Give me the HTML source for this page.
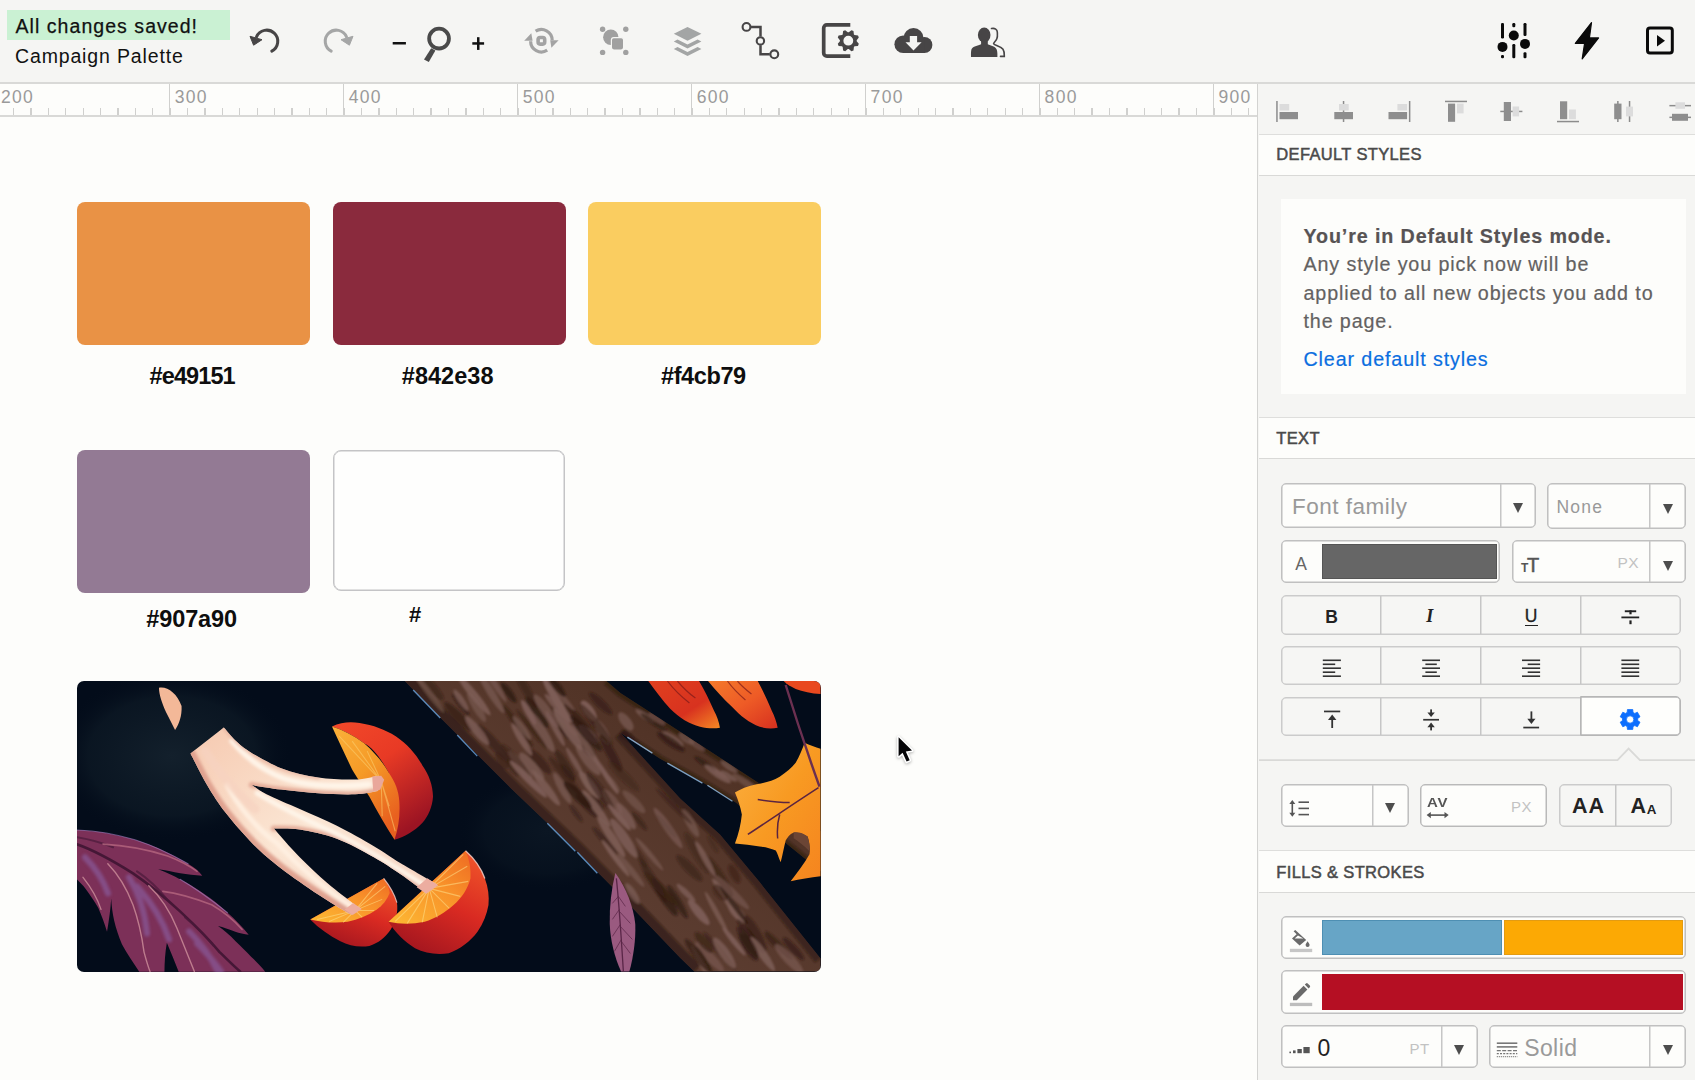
<!DOCTYPE html>
<html lang="en">
<head>
<meta charset="utf-8">
<title>Campaign Palette</title>
<style>
*{box-sizing:border-box;margin:0;padding:0}
html,body{width:1695px;height:1080px;overflow:hidden;background:#fdfdfb;font-family:"Liberation Sans",sans-serif;color:#111}
.abs{position:absolute}
#app{position:relative;width:1695px;height:1080px;overflow:hidden;background:#fdfdfb}
/* toolbar */
#toolbar{position:absolute;left:0;top:0;width:1695px;height:84px;background:#f5f5f3;border-bottom:2px solid #d9d9d7}
#saved{position:absolute;left:7px;top:10px;width:223px;height:30px;background:#caf1d3}
#saved span{position:absolute;left:8.5px;top:3.5px;font-size:19.5px;line-height:24px;color:#111;white-space:nowrap;letter-spacing:1.05px;-webkit-text-stroke:0.25px #111}
#docname{position:absolute;left:15px;top:43.5px;font-size:19.5px;line-height:24px;color:#111;white-space:nowrap;letter-spacing:0.85px}
#toolbar svg{position:absolute;overflow:visible}
/* ruler */
#ruler{position:absolute;left:0;top:84px;width:1257px;height:33px;background:#fdfdfb;border-bottom:2px solid #d9d9d7;overflow:hidden}
#ruler .minor{position:absolute;left:12.9px;top:24px;width:1245px;height:8px;background:repeating-linear-gradient(90deg,#d0d0ce 0,#d0d0ce 1.3px,transparent 1.3px,transparent 17.395px)}
#ruler .maj{position:absolute;top:0;width:1.4px;height:32px;background:#d0d0ce}
#ruler .min{position:absolute;top:24px;width:1px;height:8px;background:#cfcfcd}
#ruler .lbl{position:absolute;top:3px;font-size:17.5px;line-height:20px;color:#9a9a9a;letter-spacing:1.3px}
/* canvas */
.sw{position:absolute;width:233px;height:142.5px;border-radius:8px}
.hex{position:absolute;font-weight:bold;font-size:23.5px;line-height:26px;color:#0e0e0e;white-space:nowrap}
/* panel */
#panel{position:absolute;left:1257.3px;top:84px;width:438px;height:996px;background:#f5f5f3;border-left:1.5px solid #d3d3d1}
.hdr{position:absolute;width:436px;background:#fdfdfb;border-top:1.2px solid #dededc;border-bottom:1.5px solid #d9d9d7}
.hdr span{position:absolute;left:17.3px;font-size:16.5px;line-height:20px;color:#4a4a4a;letter-spacing:0.35px;white-space:nowrap;-webkit-text-stroke:0.5px #4a4a4a}
.box{position:absolute;background:#fdfdfb;border:1px solid #c0c0c0;border-radius:5px;box-shadow:inset 0 0 0 0.55px #c0c0c0}
.btnrow{position:absolute;background:#f6f6f4;border:1px solid #cbcbcb;border-radius:5px;box-shadow:inset 0 0 0 0.5px #cbcbcb}
.vdiv{position:absolute;top:0;bottom:0;width:1px;background:#c6c6c6;box-shadow:0.5px 0 0 0 #c6c6c6}
.arrow{position:absolute;width:0;height:0;border-left:5.4px solid transparent;border-right:5.4px solid transparent;border-top:10.8px solid #4d4d4d;margin-left:-0.5px}
.ph{position:absolute;color:#999;white-space:nowrap}
#pc svg{position:absolute;overflow:visible;pointer-events:none;z-index:2}
#pc .btnrow{z-index:0}
.card1{font-size:19.7px;line-height:28px;white-space:nowrap;letter-spacing:0.88px;-webkit-text-stroke:0.2px currentColor}
</style>
</head>
<body>
<div id="app">

<!-- TOOLBAR -->
<div id="toolbar">
  <div id="saved"><span>All changes saved!</span></div>
  <div id="docname">Campaign Palette</div>
  <svg style="left:0;top:0" width="1695" height="83" viewBox="0 0 1695 83">
  <!-- undo -->
  <g fill="none" stroke="#474546" stroke-width="3">
    <path d="M256.5 36.8A11.1 11.1 0 1 1 271.8 51.1" stroke-linecap="round"/>
  </g>
  <path d="M250 36.3L262 39.7L253.6 45.2Z" fill="#474546" stroke="#474546" stroke-width="1" stroke-linejoin="round"/>
  <!-- redo -->
  <g fill="none" stroke="#a5a6a6" stroke-width="3">
    <path d="M346.5 36.8A11.1 11.1 0 1 0 331.2 51.1" stroke-linecap="round"/>
  </g>
  <path d="M353 36.3L341 39.7L349.4 45.2Z" fill="#a5a6a6" stroke="#a5a6a6" stroke-width="1" stroke-linejoin="round"/>
  <!-- zoom minus -->
  <rect x="392.7" y="42" width="13.2" height="2.5" fill="#111"/>
  <!-- magnifier -->
  <circle cx="439.05" cy="38.6" r="9.9" fill="none" stroke="#4a4a4a" stroke-width="3.8"/>
  <path d="M431.2 48.2L435.4 50.4L428.8 62L424 59.4Z" fill="#4a4a4a"/>
  <!-- zoom plus -->
  <rect x="472.3" y="42.2" width="11.8" height="2.5" fill="#111"/>
  <rect x="477" y="37.2" width="2.5" height="12.7" fill="#111"/>
  <!-- rotate/sync (disabled) -->
  <g fill="none" stroke="#a3a3a3">
    <rect x="538.1" y="37.5" width="6.6" height="6.6" rx="2" stroke-width="3.6"/>
    <path d="M535.6 31.2A10.8 10.8 0 0 1 552.2 40.2" stroke-width="3.2"/>
    <path d="M547.2 50.2A10.8 10.8 0 0 1 530.6 41.2" stroke-width="3.2"/>
  </g>
  <path d="M524.2 40.8L531.3 33.2L532.6 40.8Z" fill="#a3a3a3"/>
  <path d="M550.2 40.3L558.6 40.3L551.4 47.8Z" fill="#a3a3a3"/>
  <!-- group (disabled) -->
  <g fill="#a0a0a0">
    <circle cx="602.6" cy="29.2" r="2.7"/><circle cx="625.8" cy="29.2" r="2.7"/>
    <circle cx="602.6" cy="52.4" r="2.7"/><circle cx="625.8" cy="52.4" r="2.7"/>
    <circle cx="610.8" cy="37.2" r="7.7"/>
    <rect x="611.4" y="37.6" width="12.2" height="12.4" rx="2.4" stroke="#f5f5f3" stroke-width="1.2"/>
  </g>
  <!-- layers (disabled) -->
  <g fill="#a3a5a5">
    <path d="M673.8 33.8L687.5 26.9L701.4 33.8L687.5 40.7Z"/>
    <path d="M673.8 41.5L677.5 39.5L687.5 44.6L697.6 39.5L701.4 41.5L687.5 48.4Z"/>
    <path d="M673.8 48.9L677.5 46.9L687.5 52L697.6 46.9L701.4 48.9L687.5 56Z"/>
  </g>
  <!-- connector -->
  <g fill="none" stroke="#474546">
    <circle cx="746.5" cy="26.9" r="3.9" stroke-width="2.1"/>
    <circle cx="760.4" cy="40.9" r="3.7" stroke-width="2.1"/>
    <circle cx="774.3" cy="54.3" r="3.9" stroke-width="2.1"/>
    <path d="M751 26.9H760.5V36.6M760.5 45.2V54.3H769.8" stroke-width="2.5"/>
  </g>
  <!-- page settings -->
  <path d="M850.3 24.9H826.9a3.2 3.2 0 0 0-3.2 3.2V52.9a3.2 3.2 0 0 0 3.2 3.2H850.3" fill="none" stroke="#474546" stroke-width="3.7"/>
  <path id="gear" fill="#474546" fill-rule="evenodd" d="M848.8 32.3L851.4 30.2L853.5 31.0L853.9 34.4L854.6 35.1L858.0 35.5L858.8 37.6L856.7 40.2L856.7 41.2L858.8 43.8L858.0 45.9L854.6 46.3L853.9 47.0L853.5 50.4L851.4 51.2L848.8 49.1L847.8 49.1L845.2 51.2L843.1 50.4L842.7 47.0L842.0 46.3L838.6 45.9L837.8 43.8L839.9 41.2L839.9 40.2L837.8 37.6L838.6 35.5L842.0 35.1L842.7 34.4L843.1 31.0L845.2 30.2L847.8 32.3ZM843.4 40.7a4.9 4.9 0 1 0 9.8 0a4.9 4.9 0 1 0 -9.8 0Z"/>
  <!-- cloud download -->
  <g fill="#474546">
    <circle cx="913.5" cy="38" r="10"/>
    <circle cx="903.2" cy="44.2" r="8.8"/>
    <circle cx="924.4" cy="45" r="8"/>
    <rect x="903" y="40" width="21.6" height="13"/>
  </g>
  <path d="M909.8 36.1H917.1V42.2H921.6L913.5 50.4L905.5 42.2H909.8Z" fill="#f5f5f3"/>
  <!-- users -->
  <g fill="#474546">
    <ellipse cx="984.2" cy="35" rx="6.3" ry="7.5"/>
    <path d="M981.1 40V44.3C978 45.5 972.5 46.5 971.4 49.5C970.8 52 971 55 971 57H997.4C997.4 55 997.6 52 996.7 49.5C995.6 46.5 990.8 45.5 987.8 44.3V40Z"/>
  </g>
  <path d="M991.5 28.5C995 27.8 997.2 29.5 997.3 32C997.5 35 997.8 37 996.8 38.8C996 41 993.6 42.5 993.6 43.6C993.8 45 1000.5 46 1003 49.2C1004.5 51.5 1004.3 54 1004.3 56.4H1000.5" fill="none" stroke="#474546" stroke-width="1.6" stroke-linecap="round"/>
  <!-- sliders -->
  <g fill="#0a0a0a">
    <rect x="1501" y="23" width="3" height="15.5" rx="1.2"/>
    <rect x="1501" y="55" width="3" height="3.3" rx="1.2"/>
    <circle cx="1502.5" cy="46.9" r="5"/>
    <rect x="1512.3" y="23" width="3" height="4.2" rx="1.2"/>
    <rect x="1512.3" y="44" width="3" height="14.3" rx="1.2"/>
    <circle cx="1513.8" cy="35.5" r="5"/>
    <rect x="1523.5" y="23" width="3" height="13" rx="1.2"/>
    <rect x="1523.5" y="52.3" width="3" height="6" rx="1.2"/>
    <circle cx="1525" cy="43.9" r="5"/>
  </g>
  <!-- lightning -->
  <path d="M1591.5 22.6L1575.3 43.3H1584.6L1582.2 58.8L1598.6 37.9H1589.4Z" fill="#0a0a0a" stroke="#0a0a0a" stroke-width="1.2" stroke-linejoin="round"/>
  <!-- play -->
  <rect x="1647.5" y="28.1" width="24.8" height="24.9" rx="2.5" fill="none" stroke="#0a0a0a" stroke-width="3"/>
  <path d="M1657 35L1665 40.7L1657 46.5Z" fill="#0a0a0a"/>
</svg>

</div>

<!-- RULER -->
<div id="ruler">
  <div class="minor"></div>
  <div class="lbl" style="left:0.9px">200</div>
  <div class="maj" style="left:168.8px"></div>
  <div class="lbl" style="left:174.8px">300</div>
  <div class="maj" style="left:342.8px"></div>
  <div class="lbl" style="left:348.8px">400</div>
  <div class="maj" style="left:516.7px"></div>
  <div class="lbl" style="left:522.7px">500</div>
  <div class="maj" style="left:690.7px"></div>
  <div class="lbl" style="left:696.7px">600</div>
  <div class="maj" style="left:864.6px"></div>
  <div class="lbl" style="left:870.6px">700</div>
  <div class="maj" style="left:1038.6px"></div>
  <div class="lbl" style="left:1044.6px">800</div>
  <div class="maj" style="left:1212.5px"></div>
  <div class="lbl" style="left:1218.5px">900</div>
</div>

<!-- CANVAS -->
<div id="canvas">
  <div class="sw" style="left:77px;top:202px;background:#e99245"></div>
  <div class="sw" style="left:333px;top:202px;background:#8a2a3d"></div>
  <div class="sw" style="left:588px;top:202px;background:#facd60"></div>
  <div class="hex" style="left:149.6px;top:362.5px;letter-spacing:-0.9px">#e49151</div>
  <div class="hex" style="left:401.8px;top:362.5px;letter-spacing:0.03px">#842e38</div>
  <div class="hex" style="left:661px;top:362.5px;letter-spacing:-0.39px">#f4cb79</div>
  <div class="sw" style="left:77px;top:450px;height:143px;background:#937a94"></div>
  <div class="sw" style="left:333px;top:450px;width:232px;height:141px;background:#fefefd;border:1px solid #c4c4c6;box-shadow:inset 0 0 0 0.5px #c4c4c6"></div>
  <div class="hex" style="left:146.3px;top:606px;letter-spacing:-0.12px">#907a90</div>
  <div class="hex" style="left:409px;top:602px;font-size:22px">#</div>
  <div class="abs" style="left:77px;top:681px;width:743.5px;height:290.5px;border-radius:7px;overflow:hidden;background:#030c1a">
  <svg width="743.5" height="290.5" viewBox="0 0 743 290" preserveAspectRatio="none" style="position:absolute;left:0;top:0">
    <defs>
      <radialGradient id="bgsm" cx="0.5" cy="0.5" r="0.5"><stop offset="0" stop-color="#13202c"/><stop offset="0.7" stop-color="#0c1824" stop-opacity="0.8"/><stop offset="1" stop-color="#030c1a" stop-opacity="0"/></radialGradient>
      <linearGradient id="trk" x1="0" y1="1" x2="1" y2="0"><stop offset="0" stop-color="#432819"/><stop offset="0.35" stop-color="#5c3d31"/><stop offset="0.7" stop-color="#523427"/><stop offset="1" stop-color="#42271a"/></linearGradient>
      <linearGradient id="stem" x1="0" y1="0" x2="1" y2="1"><stop offset="0" stop-color="#f6c9b0"/><stop offset="0.5" stop-color="#fbe6d4"/><stop offset="1" stop-color="#f3cdbb"/></linearGradient>
      <linearGradient id="dome1" x1="0" y1="0" x2="0.6" y2="1"><stop offset="0" stop-color="#f2492a"/><stop offset="0.45" stop-color="#e83a25"/><stop offset="1" stop-color="#9c1423"/></linearGradient>
      <linearGradient id="dome2" x1="0.8" y1="0" x2="0.3" y2="1"><stop offset="0" stop-color="#f0552a"/><stop offset="0.5" stop-color="#d92a22"/><stop offset="1" stop-color="#a3161f"/></linearGradient>
      <linearGradient id="face1" x1="0" y1="0" x2="0.6" y2="1"><stop offset="0" stop-color="#fbb13a"/><stop offset="0.5" stop-color="#f59a27"/><stop offset="1" stop-color="#e8601f"/></linearGradient>
      <linearGradient id="face2" x1="0" y1="1" x2="1" y2="0"><stop offset="0" stop-color="#fdb933"/><stop offset="0.6" stop-color="#f8912a"/><stop offset="1" stop-color="#ee6a22"/></linearGradient>
      <linearGradient id="purp" x1="0" y1="0" x2="1" y2="1"><stop offset="0" stop-color="#6e3358"/><stop offset="0.5" stop-color="#8f4a78"/><stop offset="1" stop-color="#9a3f6a"/></linearGradient>
      <linearGradient id="rl1" x1="0" y1="0" x2="1" y2="1"><stop offset="0" stop-color="#e0401f"/><stop offset="0.6" stop-color="#d8321f"/><stop offset="1" stop-color="#f68a24"/></linearGradient>
      <linearGradient id="rl2" x1="0" y1="0" x2="1" y2="1"><stop offset="0" stop-color="#f47a2b"/><stop offset="0.5" stop-color="#ee5b26"/><stop offset="1" stop-color="#d6301f"/></linearGradient>
      <linearGradient id="maple" x1="0" y1="0" x2="1" y2="1"><stop offset="0" stop-color="#fbb040"/><stop offset="0.5" stop-color="#f89a22"/><stop offset="1" stop-color="#f5841f"/></linearGradient>
    </defs>
    <!-- background smudges -->
    <ellipse cx="95" cy="75" rx="120" ry="85" fill="url(#bgsm)"/>
    <ellipse cx="470" cy="150" rx="90" ry="60" fill="url(#bgsm)" opacity="0.5"/>
    <!-- TRUNK -->
    <path d="M327.6 0L529 0L543 11.9L582.8 37.8L622.6 63.7L662.4 89.5L682.3 102.5L743 150L743 190L658.4 121.4L622.6 99.5L582.8 77.6L543 51.7L562.9 73.6L602.7 117.4L642.5 153.2L682.3 201L743 277L743 290L617 290L603 276.4L538 208.6L498.6 169L433.6 107L363 36.4Z" fill="url(#trk)"/>
    <filter id="sblur" x="-20%" y="-20%" width="140%" height="140%"><feGaussianBlur stdDeviation="1.8"/></filter><clipPath id="tclip"><path d="M327.6 0L529 0L543 11.9L582.8 37.8L622.6 63.7L662.4 89.5L682.3 102.5L743 150L743 190L658.4 121.4L622.6 99.5L582.8 77.6L543 51.7L562.9 73.6L602.7 117.4L642.5 153.2L682.3 201L743 277L743 290L617 290L603 276.4L538 208.6L498.6 169L433.6 107L363 36.4Z"/></clipPath><filter id="tblur" x="-5%" y="-5%" width="110%" height="110%"><feGaussianBlur stdDeviation="1.3"/></filter><g clip-path="url(#tclip)"><g filter="url(#tblur)"><path d="M327.6 0L363 36.4L433.6 107L498.6 169L538 208.6L603 276.4L617 290" stroke="#26140c" stroke-width="18" fill="none" opacity="0.6"/><path d="M543 51.7L562.9 73.6L602.7 117.4L642.5 153.2L682.3 201L743 277" stroke="#26140c" stroke-width="14" fill="none" opacity="0.55"/><path d="M529 0L543 11.9L582.8 37.8L622.6 63.7L662.4 89.5L682.3 102.5L743 150" stroke="#26140c" stroke-width="8" fill="none" opacity="0.5"/><path d="M543 51.7L582.8 77.6L622.6 99.5L658.4 121.4L743 190" stroke="#26140c" stroke-width="7" fill="none" opacity="0.5"/><ellipse cx="587.3" cy="215.1" rx="22.7" ry="5.0" transform="rotate(57 587.3 215.1)" fill="#2c1810" opacity="0.74"/><ellipse cx="487.3" cy="29.6" rx="14.0" ry="4.4" transform="rotate(51 487.3 29.6)" fill="#7e5e57" opacity="0.61"/><ellipse cx="416.5" cy="62.5" rx="25.7" ry="4.8" transform="rotate(49 416.5 62.5)" fill="#3a2116" opacity="0.76"/><ellipse cx="572.1" cy="172.8" rx="21.3" ry="2.6" transform="rotate(50 572.1 172.8)" fill="#7e5e57" opacity="0.62"/><ellipse cx="525.2" cy="51.1" rx="14.1" ry="5.0" transform="rotate(61 525.2 51.1)" fill="#7e5e57" opacity="0.56"/><ellipse cx="642.1" cy="269.6" rx="25.1" ry="3.4" transform="rotate(50 642.1 269.6)" fill="#331c12" opacity="0.49"/><ellipse cx="639.1" cy="231.2" rx="23.8" ry="2.5" transform="rotate(61 639.1 231.2)" fill="#7e5e57" opacity="0.76"/><ellipse cx="479.8" cy="43.0" rx="14.4" ry="4.4" transform="rotate(46 479.8 43.0)" fill="#331c12" opacity="0.51"/><ellipse cx="396.7" cy="14.1" rx="25.8" ry="3.9" transform="rotate(51 396.7 14.1)" fill="#7e5e57" opacity="0.88"/><ellipse cx="518.2" cy="122.3" rx="10.9" ry="5.0" transform="rotate(45 518.2 122.3)" fill="#2c1810" opacity="0.50"/><ellipse cx="632.2" cy="275.4" rx="20.1" ry="4.6" transform="rotate(46 632.2 275.4)" fill="#7e5e57" opacity="0.57"/><ellipse cx="503.7" cy="40.9" rx="24.8" ry="4.1" transform="rotate(47 503.7 40.9)" fill="#331c12" opacity="0.69"/><ellipse cx="461.2" cy="79.5" rx="17.5" ry="4.9" transform="rotate(46 461.2 79.5)" fill="#3a2116" opacity="0.79"/><ellipse cx="588.9" cy="144.8" rx="15.4" ry="2.6" transform="rotate(49 588.9 144.8)" fill="#3a2116" opacity="0.58"/><ellipse cx="654.6" cy="224.7" rx="21.1" ry="4.3" transform="rotate(58 654.6 224.7)" fill="#7e5e57" opacity="0.88"/><ellipse cx="625.7" cy="277.5" rx="15.4" ry="2.9" transform="rotate(59 625.7 277.5)" fill="#331c12" opacity="0.56"/><ellipse cx="443.0" cy="83.8" rx="18.0" ry="4.3" transform="rotate(50 443.0 83.8)" fill="#7e5e57" opacity="0.85"/><ellipse cx="678.1" cy="252.3" rx="21.0" ry="5.1" transform="rotate(61 678.1 252.3)" fill="#3a2116" opacity="0.79"/><ellipse cx="626.7" cy="286.1" rx="25.7" ry="2.9" transform="rotate(60 626.7 286.1)" fill="#7e5e57" opacity="0.74"/><ellipse cx="556.5" cy="120.5" rx="15.6" ry="4.3" transform="rotate(45 556.5 120.5)" fill="#7e5e57" opacity="0.55"/><ellipse cx="497.4" cy="80.8" rx="16.6" ry="2.7" transform="rotate(59 497.4 80.8)" fill="#7e5e57" opacity="0.77"/><ellipse cx="454.5" cy="85.6" rx="18.2" ry="5.1" transform="rotate(49 454.5 85.6)" fill="#7e5e57" opacity="0.72"/><ellipse cx="482.6" cy="41.2" rx="19.5" ry="4.0" transform="rotate(61 482.6 41.2)" fill="#3a2116" opacity="0.48"/><ellipse cx="487.7" cy="94.6" rx="24.7" ry="3.9" transform="rotate(50 487.7 94.6)" fill="#3a2116" opacity="0.58"/><ellipse cx="508.3" cy="65.6" rx="14.7" ry="5.1" transform="rotate(51 508.3 65.6)" fill="#2c1810" opacity="0.66"/><ellipse cx="535.0" cy="120.5" rx="15.1" ry="5.2" transform="rotate(53 535.0 120.5)" fill="#7e5e57" opacity="0.56"/><ellipse cx="431.4" cy="11.6" rx="12.2" ry="3.5" transform="rotate(53 431.4 11.6)" fill="#2c1810" opacity="0.78"/><ellipse cx="440.6" cy="44.9" rx="25.8" ry="3.2" transform="rotate(55 440.6 44.9)" fill="#3a2116" opacity="0.75"/><ellipse cx="693.7" cy="259.6" rx="10.3" ry="2.8" transform="rotate(49 693.7 259.6)" fill="#3a2116" opacity="0.55"/><ellipse cx="548.8" cy="134.7" rx="15.8" ry="4.5" transform="rotate(55 548.8 134.7)" fill="#7e5e57" opacity="0.77"/><ellipse cx="575.7" cy="199.8" rx="25.3" ry="4.2" transform="rotate(59 575.7 199.8)" fill="#331c12" opacity="0.59"/><ellipse cx="527.6" cy="159.2" rx="18.0" ry="3.3" transform="rotate(47 527.6 159.2)" fill="#2c1810" opacity="0.47"/><ellipse cx="657.0" cy="192.4" rx="10.4" ry="4.4" transform="rotate(62 657.0 192.4)" fill="#3a2116" opacity="0.62"/><ellipse cx="381.0" cy="35.5" rx="19.8" ry="4.7" transform="rotate(46 381.0 35.5)" fill="#331c12" opacity="0.70"/><ellipse cx="510.9" cy="53.1" rx="13.0" ry="4.6" transform="rotate(45 510.9 53.1)" fill="#7e5e57" opacity="0.81"/><ellipse cx="613.1" cy="141.9" rx="15.7" ry="4.2" transform="rotate(60 613.1 141.9)" fill="#7e5e57" opacity="0.61"/><ellipse cx="590.7" cy="146.7" rx="24.6" ry="4.0" transform="rotate(55 590.7 146.7)" fill="#7e5e57" opacity="0.65"/><ellipse cx="528.4" cy="93.8" rx="22.7" ry="2.5" transform="rotate(57 528.4 93.8)" fill="#7e5e57" opacity="0.93"/><ellipse cx="621.3" cy="230.9" rx="16.1" ry="4.4" transform="rotate(50 621.3 230.9)" fill="#7e5e57" opacity="0.93"/><ellipse cx="479.6" cy="10.5" rx="25.9" ry="3.0" transform="rotate(47 479.6 10.5)" fill="#7e5e57" opacity="0.56"/><ellipse cx="413.6" cy="11.4" rx="24.2" ry="3.7" transform="rotate(58 413.6 11.4)" fill="#7e5e57" opacity="0.67"/><ellipse cx="716.0" cy="267.3" rx="15.2" ry="3.7" transform="rotate(47 716.0 267.3)" fill="#2c1810" opacity="0.58"/><ellipse cx="444.6" cy="46.8" rx="14.6" ry="3.1" transform="rotate(53 444.6 46.8)" fill="#7e5e57" opacity="0.68"/><ellipse cx="354.3" cy="6.3" rx="17.3" ry="4.8" transform="rotate(47 354.3 6.3)" fill="#331c12" opacity="0.55"/><ellipse cx="608.6" cy="211.5" rx="12.6" ry="3.0" transform="rotate(44 608.6 211.5)" fill="#7e5e57" opacity="0.80"/><ellipse cx="479.3" cy="19.4" rx="25.9" ry="3.7" transform="rotate(58 479.3 19.4)" fill="#7e5e57" opacity="0.93"/><ellipse cx="596.7" cy="124.9" rx="25.6" ry="2.4" transform="rotate(45 596.7 124.9)" fill="#331c12" opacity="0.51"/><ellipse cx="612.0" cy="186.8" rx="18.0" ry="4.6" transform="rotate(45 612.0 186.8)" fill="#331c12" opacity="0.56"/><ellipse cx="351.2" cy="10.9" rx="25.5" ry="2.9" transform="rotate(53 351.2 10.9)" fill="#7e5e57" opacity="0.58"/><ellipse cx="459.6" cy="31.3" rx="18.7" ry="5.0" transform="rotate(55 459.6 31.3)" fill="#2c1810" opacity="0.67"/><ellipse cx="512.2" cy="103.7" rx="16.8" ry="4.6" transform="rotate(53 512.2 103.7)" fill="#7e5e57" opacity="0.92"/><ellipse cx="383.6" cy="23.8" rx="13.9" ry="2.6" transform="rotate(52 383.6 23.8)" fill="#2c1810" opacity="0.55"/><ellipse cx="533.5" cy="72.1" rx="21.3" ry="4.6" transform="rotate(60 533.5 72.1)" fill="#2c1810" opacity="0.60"/><ellipse cx="600.1" cy="220.3" rx="19.2" ry="3.6" transform="rotate(59 600.1 220.3)" fill="#2c1810" opacity="0.70"/><ellipse cx="383.8" cy="19.1" rx="12.7" ry="3.1" transform="rotate(56 383.8 19.1)" fill="#7e5e57" opacity="0.77"/><ellipse cx="478.0" cy="47.4" rx="19.9" ry="2.9" transform="rotate(62 478.0 47.4)" fill="#7e5e57" opacity="0.80"/><ellipse cx="509.5" cy="124.5" rx="15.3" ry="3.6" transform="rotate(48 509.5 124.5)" fill="#2c1810" opacity="0.60"/><ellipse cx="647.0" cy="271.5" rx="18.5" ry="5.1" transform="rotate(55 647.0 271.5)" fill="#7e5e57" opacity="0.82"/><ellipse cx="415.7" cy="0.3" rx="24.5" ry="3.1" transform="rotate(57 415.7 0.3)" fill="#7e5e57" opacity="0.64"/><ellipse cx="444.4" cy="58.3" rx="19.0" ry="3.4" transform="rotate(58 444.4 58.3)" fill="#7e5e57" opacity="0.87"/><ellipse cx="534.2" cy="101.3" rx="12.3" ry="3.1" transform="rotate(51 534.2 101.3)" fill="#7e5e57" opacity="0.59"/><ellipse cx="626.4" cy="261.1" rx="13.2" ry="4.6" transform="rotate(50 626.4 261.1)" fill="#3a2116" opacity="0.67"/><ellipse cx="490.7" cy="92.0" rx="10.4" ry="3.3" transform="rotate(51 490.7 92.0)" fill="#3a2116" opacity="0.69"/><ellipse cx="448.3" cy="7.9" rx="22.4" ry="4.1" transform="rotate(60 448.3 7.9)" fill="#331c12" opacity="0.56"/><ellipse cx="641.2" cy="194.3" rx="25.3" ry="4.9" transform="rotate(56 641.2 194.3)" fill="#3a2116" opacity="0.66"/><ellipse cx="562.1" cy="140.1" rx="11.5" ry="2.7" transform="rotate(50 562.1 140.1)" fill="#331c12" opacity="0.59"/><ellipse cx="701.5" cy="264.0" rx="19.8" ry="3.5" transform="rotate(46 701.5 264.0)" fill="#3a2116" opacity="0.69"/><ellipse cx="659.3" cy="231.2" rx="11.2" ry="5.1" transform="rotate(45 659.3 231.2)" fill="#7e5e57" opacity="0.64"/><ellipse cx="672.9" cy="254.8" rx="21.6" ry="3.6" transform="rotate(52 672.9 254.8)" fill="#2c1810" opacity="0.56"/><ellipse cx="562.3" cy="175.0" rx="12.9" ry="2.9" transform="rotate(55 562.3 175.0)" fill="#3a2116" opacity="0.57"/><ellipse cx="523.3" cy="111.4" rx="24.4" ry="4.9" transform="rotate(55 523.3 111.4)" fill="#2c1810" opacity="0.45"/><ellipse cx="468.7" cy="106.6" rx="22.2" ry="4.0" transform="rotate(52 468.7 106.6)" fill="#7e5e57" opacity="0.84"/><ellipse cx="711.6" cy="277.5" rx="20.0" ry="5.1" transform="rotate(46 711.6 277.5)" fill="#7e5e57" opacity="0.63"/><ellipse cx="463.9" cy="50.1" rx="24.3" ry="5.2" transform="rotate(58 463.9 50.1)" fill="#7e5e57" opacity="0.70"/><ellipse cx="643.8" cy="209.2" rx="14.7" ry="2.7" transform="rotate(53 643.8 209.2)" fill="#7e5e57" opacity="0.92"/><ellipse cx="487.8" cy="84.3" rx="18.0" ry="4.4" transform="rotate(58 487.8 84.3)" fill="#331c12" opacity="0.59"/><ellipse cx="508.6" cy="63.9" rx="25.8" ry="3.2" transform="rotate(57 508.6 63.9)" fill="#7e5e57" opacity="0.77"/><ellipse cx="508.6" cy="52.2" rx="23.5" ry="4.8" transform="rotate(48 508.6 52.2)" fill="#2c1810" opacity="0.73"/><ellipse cx="479.1" cy="4.8" rx="14.0" ry="3.7" transform="rotate(51 479.1 4.8)" fill="#2c1810" opacity="0.79"/><ellipse cx="685.2" cy="272.5" rx="20.6" ry="4.1" transform="rotate(55 685.2 272.5)" fill="#7e5e57" opacity="0.86"/><ellipse cx="671.0" cy="265.5" rx="16.1" ry="5.2" transform="rotate(58 671.0 265.5)" fill="#2c1810" opacity="0.56"/><ellipse cx="492.5" cy="55.3" rx="12.2" ry="3.4" transform="rotate(44 492.5 55.3)" fill="#2c1810" opacity="0.72"/><ellipse cx="523.3" cy="22.4" rx="15.8" ry="4.1" transform="rotate(44 523.3 22.4)" fill="#2c1810" opacity="0.54"/><ellipse cx="484.9" cy="106.9" rx="17.6" ry="4.0" transform="rotate(61 484.9 106.9)" fill="#7e5e57" opacity="0.66"/><ellipse cx="555.2" cy="212.1" rx="12.1" ry="3.7" transform="rotate(57 555.2 212.1)" fill="#7e5e57" opacity="0.72"/><ellipse cx="538.2" cy="177.0" rx="22.7" ry="2.6" transform="rotate(53 538.2 177.0)" fill="#7e5e57" opacity="0.90"/><ellipse cx="511.5" cy="29.7" rx="12.0" ry="4.9" transform="rotate(54 511.5 29.7)" fill="#7e5e57" opacity="0.95"/><ellipse cx="454.6" cy="48.3" rx="24.9" ry="2.6" transform="rotate(52 454.6 48.3)" fill="#3a2116" opacity="0.67"/><ellipse cx="498.8" cy="132.3" rx="11.0" ry="2.4" transform="rotate(54 498.8 132.3)" fill="#2c1810" opacity="0.47"/><ellipse cx="438.7" cy="80.0" rx="22.5" ry="4.5" transform="rotate(49 438.7 80.0)" fill="#3a2116" opacity="0.54"/><ellipse cx="619.9" cy="171.7" rx="24.0" ry="5.0" transform="rotate(59 619.9 171.7)" fill="#3a2116" opacity="0.47"/><ellipse cx="635.5" cy="162.8" rx="10.2" ry="2.5" transform="rotate(59 635.5 162.8)" fill="#3a2116" opacity="0.46"/><ellipse cx="627.8" cy="177.3" rx="19.8" ry="3.0" transform="rotate(61 627.8 177.3)" fill="#7e5e57" opacity="0.84"/><ellipse cx="546.6" cy="156.9" rx="23.4" ry="5.1" transform="rotate(56 546.6 156.9)" fill="#7e5e57" opacity="0.85"/><ellipse cx="436.8" cy="86.6" rx="10.0" ry="4.5" transform="rotate(53 436.8 86.6)" fill="#331c12" opacity="0.58"/><ellipse cx="519.0" cy="43.6" rx="25.9" ry="4.2" transform="rotate(52 519.0 43.6)" fill="#331c12" opacity="0.51"/><ellipse cx="533.9" cy="155.5" rx="24.4" ry="4.0" transform="rotate(56 533.9 155.5)" fill="#7e5e57" opacity="0.88"/><ellipse cx="451.3" cy="31.3" rx="14.1" ry="3.4" transform="rotate(60 451.3 31.3)" fill="#7e5e57" opacity="0.93"/><ellipse cx="468.9" cy="29.9" rx="20.1" ry="4.8" transform="rotate(54 468.9 29.9)" fill="#7e5e57" opacity="0.62"/><ellipse cx="450.9" cy="97.8" rx="26.0" ry="3.5" transform="rotate(45 450.9 97.8)" fill="#7e5e57" opacity="0.93"/><ellipse cx="656.5" cy="259.9" rx="18.1" ry="2.7" transform="rotate(51 656.5 259.9)" fill="#7e5e57" opacity="0.93"/><ellipse cx="553.5" cy="188.9" rx="20.9" ry="3.3" transform="rotate(51 553.5 188.9)" fill="#7e5e57" opacity="0.59"/><ellipse cx="510.7" cy="78.9" rx="18.8" ry="5.1" transform="rotate(52 510.7 78.9)" fill="#7e5e57" opacity="0.70"/><ellipse cx="548.5" cy="40.4" rx="10.9" ry="5.0" transform="rotate(52 548.5 40.4)" fill="#7e5e57" opacity="0.66"/><ellipse cx="399.3" cy="26.0" rx="17.1" ry="4.1" transform="rotate(59 399.3 26.0)" fill="#7e5e57" opacity="0.59"/><ellipse cx="477.1" cy="15.2" rx="21.5" ry="2.7" transform="rotate(58 477.1 15.2)" fill="#7e5e57" opacity="0.81"/><ellipse cx="642.7" cy="211.2" rx="10.0" ry="5.0" transform="rotate(50 642.7 211.2)" fill="#3a2116" opacity="0.55"/><ellipse cx="546.5" cy="95.1" rx="21.0" ry="4.6" transform="rotate(44 546.5 95.1)" fill="#3a2116" opacity="0.45"/><ellipse cx="656.6" cy="223.7" rx="23.4" ry="2.5" transform="rotate(54 656.6 223.7)" fill="#2c1810" opacity="0.71"/><ellipse cx="399.8" cy="49.6" rx="18.1" ry="4.3" transform="rotate(51 399.8 49.6)" fill="#7e5e57" opacity="0.81"/><ellipse cx="424.6" cy="79.4" rx="10.2" ry="4.2" transform="rotate(54 424.6 79.4)" fill="#3a2116" opacity="0.58"/><ellipse cx="654.0" cy="210.7" rx="24.3" ry="3.9" transform="rotate(44 654.0 210.7)" fill="#7e5e57" opacity="0.56"/><ellipse cx="519.2" cy="127.1" rx="22.8" ry="3.7" transform="rotate(53 519.2 127.1)" fill="#7e5e57" opacity="0.88"/><ellipse cx="583.6" cy="207.6" rx="23.6" ry="4.1" transform="rotate(44 583.6 207.6)" fill="#3a2116" opacity="0.52"/><ellipse cx="490.6" cy="48.1" rx="25.3" ry="4.9" transform="rotate(56 490.6 48.1)" fill="#7e5e57" opacity="0.91"/><ellipse cx="670.3" cy="260.9" rx="19.0" ry="4.7" transform="rotate(57 670.3 260.9)" fill="#2c1810" opacity="0.56"/><ellipse cx="481.0" cy="27.5" rx="19.7" ry="3.4" transform="rotate(47 481.0 27.5)" fill="#7e5e57" opacity="0.77"/><ellipse cx="621.3" cy="275.0" rx="21.9" ry="4.4" transform="rotate(52 621.3 275.0)" fill="#331c12" opacity="0.70"/><ellipse cx="500.3" cy="114.0" rx="18.9" ry="5.1" transform="rotate(44 500.3 114.0)" fill="#2c1810" opacity="0.74"/><ellipse cx="541.9" cy="136.2" rx="17.1" ry="2.8" transform="rotate(49 541.9 136.2)" fill="#7e5e57" opacity="0.94"/><ellipse cx="638.0" cy="89.4" rx="13.7" ry="2.6" transform="rotate(34 638.0 89.4)" fill="#7e5e57" opacity="0.63"/><ellipse cx="619.3" cy="64.0" rx="9.7" ry="3.1" transform="rotate(34 619.3 64.0)" fill="#7e5e57" opacity="0.57"/><ellipse cx="668.2" cy="101.6" rx="15.6" ry="3.3" transform="rotate(34 668.2 101.6)" fill="#7e5e57" opacity="0.51"/><ellipse cx="719.9" cy="140.0" rx="13.8" ry="4.0" transform="rotate(34 719.9 140.0)" fill="#7e5e57" opacity="0.61"/><ellipse cx="627.7" cy="82.7" rx="13.1" ry="2.7" transform="rotate(34 627.7 82.7)" fill="#2c1810" opacity="0.68"/><ellipse cx="704.8" cy="124.9" rx="13.9" ry="3.2" transform="rotate(34 704.8 124.9)" fill="#7e5e57" opacity="0.65"/><ellipse cx="567.8" cy="35.2" rx="11.4" ry="3.1" transform="rotate(34 567.8 35.2)" fill="#7e5e57" opacity="0.71"/><ellipse cx="651.5" cy="85.5" rx="10.1" ry="3.0" transform="rotate(34 651.5 85.5)" fill="#7e5e57" opacity="0.70"/><ellipse cx="651.4" cy="94.9" rx="9.5" ry="2.6" transform="rotate(34 651.4 94.9)" fill="#7e5e57" opacity="0.72"/><ellipse cx="595.7" cy="57.5" rx="12.5" ry="3.0" transform="rotate(34 595.7 57.5)" fill="#7e5e57" opacity="0.74"/><ellipse cx="640.1" cy="92.8" rx="15.7" ry="3.6" transform="rotate(34 640.1 92.8)" fill="#7e5e57" opacity="0.80"/><ellipse cx="576.2" cy="41.3" rx="15.8" ry="2.7" transform="rotate(34 576.2 41.3)" fill="#2c1810" opacity="0.65"/><ellipse cx="593.7" cy="60.9" rx="16.5" ry="4.1" transform="rotate(34 593.7 60.9)" fill="#2c1810" opacity="0.64"/><ellipse cx="700.1" cy="132.3" rx="10.2" ry="3.9" transform="rotate(34 700.1 132.3)" fill="#7e5e57" opacity="0.69"/><ellipse cx="609.0" cy="57.6" rx="9.1" ry="3.7" transform="rotate(34 609.0 57.6)" fill="#7e5e57" opacity="0.61"/><ellipse cx="579.3" cy="37.7" rx="9.9" ry="3.1" transform="rotate(34 579.3 37.7)" fill="#7e5e57" opacity="0.57"/></g></g>
    <!-- blue rim light on trunk -->
    <path d="M336 9L363 37M380 54L400 75M470 142L498 170M500 171L520 192" stroke="#6ea6de" stroke-width="1.4" fill="none" opacity="0.8"/>
    <path d="M550 56L575 72M590 82L625 102M630 104L655 120" stroke="#9cc4ea" stroke-width="1.3" fill="none" opacity="0.8"/>
    <!-- red leaves top -->
    <path d="M570.9 0C578 10 585 19 592.8 27.8C602 37 612 43 622.6 45.7C630 47.5 637 47.5 642.5 46.7C641.5 41 639.5 35 636.6 29.8C632 19 627 9 621.6 0Z" fill="url(#rl1)"/>
    <path d="M630.6 0C638 9 646 18 654.5 25.8C663 35 672 42 682.3 45.7C689 47.8 695 47.8 700.2 46.7C699 41 697 35 694.3 29.8C690 19 685 9 680.3 0Z" fill="url(#rl2)"/>
    <path d="M706.2 0L743 0L743 12.9C734 12.5 725 10.5 718.2 7.9C713 5.5 709 3 706.2 0Z" fill="#e9491f"/>
    <path d="M590 0C596 8 603 15 612 22M600 0C605 6 611 12 618 17M650 0C655 7 661 13 668 19M660 0C664 5 669 9 674 13" stroke="#7a1a1a" stroke-width="1.2" fill="none" opacity="0.7"/>
    <!-- maple leaf -->
    <path d="M657.5 111.4C666 106 674 104 682.3 102.5C690 101 696 99 702.2 95.5C709 91 714 87 718.2 81.6C722 75 725 68 727.1 61.7C732 64 738 66 743 67.6L743 195C733 196 722 198 713.2 200C720 191 727 182 732 173C733 167 732 161 730.1 155.2C725 152 720 151 716.2 151.2C712 153 710 156 708.2 159.2C706.5 166 705 174 703.2 181C701 176 700 172 698.3 169.2C693 167 688 166 682.3 165.2C674 164 666 163 657.5 162.2C661 153 663.5 143 664.4 133.3C663 126 660.5 118 657.5 111.4Z" fill="url(#maple)"/>
    <path d="M716.2 151.2C721 150.5 726 152 730.1 155.2C732 161 732.5 166 732 170C726 164 721 160 716.2 157Z" fill="#6b4535"/>
    <path d="M741 106.5C720 120 695 137 670.4 153.2M712.2 121.4C702 121.5 691 120 680.3 118.4M702.2 133.3C700 141 699.5 149 700.2 157.2" stroke="#5b2440" stroke-width="1.5" fill="none"/>
    <!-- stem of maple -->
    <path d="M708.2 4C718 36 730 72 742 105.5" stroke="#6b3050" stroke-width="2.4" fill="none"/>
    <!-- small purple leaf -->
    <path d="M538 191.7C534 208 532 225 532.4 242.5C533 259 537 275 543.7 290L552 290C556 275 558.5 259 557.9 242.5C556 225 549 207 538 191.7Z" fill="#9a5a80"/>
    <path d="M539 197C542 225 544 258 546 290" stroke="#5a2647" stroke-width="1.3" fill="none"/>
    <path d="M541 215L535 222M542 228L535 238M543 243L535 255M544 258L537 270M541 215L548 225M542 230L553 242M543 245L555 258M544 260L553 272" stroke="#5a2647" stroke-width="0.9" fill="none" opacity="0.8"/>
    <!-- purple feather leaf -->
    <path d="M0 148.7C8 149 16 150 24.5 151C35 153 46 155 55.9 158.1C67 161 77 165 87.4 169.9C96 174 104 178 111 182.5C117 186 122 190 125.2 194.3C118 194 110 193 103.2 192C96 190.5 88 189 81.1 188C89 191 96 194 103.2 198.2C111 202 119 207 126.8 212.4C135 218 143 224 150.4 231.3C158 238 165 245 171.6 253.3C167 252.5 162 251.5 158.2 250.2C152 248 146 246 140.9 244.7C147 249 153 254 158.2 259.6C164 265 169 270 174 275.4C179 280 184 285 188.1 290.3L101.6 290.3C98 281 94 271 89.8 261.2C88 271 87.5 281 87.4 290.3L62.2 290.3C56 281 50 272 44.9 262.8C41.5 255 39 247 37.1 239.2C35.5 232 34.5 224 34.2 217.1C33.5 228 32 239 30 250.2C27.5 242 24.5 234 21.3 226.6C17.5 220 13 213.5 8.7 207.7C6 204 3 201 0 198.2Z" fill="#7c3058"/>
    <g fill="none" stroke-linecap="round">
      <path d="M8 176C18 186 26 198 31 212M52 196C62 212 68 232 70 252M60 205C75 222 86 240 92 258M112 250C124 262 134 276 140 289M120 262C130 272 138 282 144 290" stroke="#8b62a6" stroke-width="6" opacity="0.6" filter="url(#sblur)"/>
      <path d="M0 163C20 170 40 182 56 192C75 205 90 218 103 230C118 244 132 258 142.5 270.6C150 278 157 285 163 290" stroke="#3c1330" stroke-width="2.6" opacity="0.85"/>
      <path d="M0 156C12 158 24 161 36 166M60 190C72 198 82 208 90 218M108 236C118 244 128 254 136 264" stroke="#4a1a3a" stroke-width="2" opacity="0.7"/>
      <path d="M30.8 182.5C42 194 50 208 55.9 223.4C62 240 65 256 67 270.6C69 278 71 285 73 290M71.7 204.5C84 216 93 230 100 247C106 262 112 277 117.3 290M6 196C14 206 20 216 24 228" stroke="#c98a97" stroke-width="1.4" opacity="0.85"/>
      <path d="M26 162.8C48 164 70 168 90.6 174.6C102 179 112 184 120 190M85.8 210C102 212 118 217 134.6 223.4C146 230 156 238 165 248" stroke="#b5677f" stroke-width="1.6" opacity="0.8"/>
      <path d="M0 148.7C20 149.5 40 153 58 158.5C78 165 96 174 111 182.5M103 198C120 208 136 220 150.4 231.3" stroke="#a98ad0" stroke-width="1.1" opacity="0.55"/>
    </g>
    <!-- small petal -->
    <path d="M81.9 6.7C90 5 100 12 104.5 25C105 35 102 43 98 49C95 43 92 37 88.9 31C85 22 82 14 81.9 6.7Z" fill="#f3b898"/>
    <!-- cap 1 -->
    <path d="M254.8 45.5C264 41 273 40.5 282.4 41.9C296 44 308 48.5 318.5 55.1C330 63 339 73 345 84C352 94 355.5 104 355.8 115.3C355 126 351 135 345 141.8C337 150 328 155.5 317.3 158.6C318 140 316 120 311.3 91.2C303 76 295 66 287.2 62.3C277 55 266 49 254.8 45.5Z" fill="url(#dome1)"/>
    <path d="M254.8 45.5C266 49 277 55 287.2 62.3C297 71 305 80 311.3 91.2C318 101 321.5 110 322.1 120.1C323 133 321.5 146 317.3 158.6C308 144 300 130 292.1 115.3C286 106 280.5 97.5 275.2 88.8C268 74 261 59 254.8 45.5Z" fill="url(#face1)"/>
    <path d="M304 100L262 55M304 100L275 60M304 100L290 70M304 100L312 125M304 100L305 135M304 100L318 150" stroke="#fcd071" stroke-width="1.1" fill="none" opacity="0.55"/>
    
    <!-- cap 2 -->
    <path d="M233.1 238L306.5 197.1C312 204 317 212 319.7 221.2C321 230 319 239 313.7 247.7C308 256 301 261.5 292.1 264.5C282 266 272 264.5 263.2 259.7C252 254 242 247 233.1 238Z" fill="url(#dome2)"/>
    <path d="M233.1 238L306.5 197.1C310 202 312 207 312.5 211.6C310 218 305.5 224 299.3 228.4C291 234 281 238 270.4 240.4C258 242 245 241 233.1 238Z" fill="url(#face2)"/>
    <path d="M278 229L240 238M278 229L252 240M278 229L266 241M278 229L285 236M278 229L297 229M278 229L305 218M278 229L308 205M278 229L300 202" stroke="#fde08a" stroke-width="1" fill="none" opacity="0.55"/>
    <path d="M306.5 197.1C312 204 317 212 319.7 221.2" stroke="#f6d6d0" stroke-width="1.2" fill="none" opacity="0.8"/>
    <!-- cap 3 -->
    <path d="M311.3 240.4L388.3 169.4C398 178 404 187 407.6 197.1C411 206 412 215 411.2 223.6C409.5 233 406 242 400.4 250C393 260 383 267.5 371.5 271.7C360 273.5 348 272 337.8 266.9C327 260 318 251 311.3 240.4Z" fill="url(#dome2)"/>
    <path d="M311.3 240.4L388.3 169.4C392 178 393.8 187 393.2 197.1C390.5 207 385 216 376.3 223.6C368 231 358 237 347.4 240.4C335 243 323 243 311.3 240.4Z" fill="url(#face2)"/>
    <path d="M352 207L318 240M352 207L330 242M352 207L345 241M352 207L360 236M352 207L372 227M352 207L383 215M352 207L391 200M352 207L390 185M352 207L386 173" stroke="#fde08a" stroke-width="1.1" fill="none" opacity="0.55"/>
    <path d="M388.3 169.4C398 178 404 187 407.6 197.1" stroke="#f6d6d0" stroke-width="1.3" fill="none" opacity="0.8"/>
    
    
  <!-- mushroom stems -->
    <path d="M113.4 72.3L146.7 46.4C150.1 49.8 157.4 60.0 167.0 66.8C176.6 73.6 191.7 82.2 204.0 87.1C216.3 92.0 228.7 94.5 241.0 96.4C253.3 98.3 268.3 98.5 278.0 98.3C287.7 98.1 295.5 95.5 299.0 95.0L304 102L300.7 109.8C296.9 110.3 287.9 112.7 278.0 113.1C268.1 113.5 253.3 112.9 241.0 112.1C228.7 111.3 215.1 109.8 204.0 108.4C192.9 107.0 179.4 104.6 174.5 103.8C177.0 105.3 181.3 109.1 189.3 113.1C197.3 117.1 210.9 122.7 222.6 127.9C234.3 133.2 247.3 138.4 259.7 144.6C272.1 150.8 286.1 158.7 296.7 164.9C307.2 171.1 312.4 175.2 323.0 181.6C333.6 187.9 353.8 199.4 360.0 203.0L348.7 211.4C344.4 208.3 331.7 198.6 323.0 192.7C314.3 186.8 307.2 181.9 296.7 176.0C286.1 170.1 272.1 162.1 259.7 157.5C247.3 152.9 233.1 150.0 222.6 148.3C212.1 146.6 201.0 147.5 196.7 147.3C201.0 152.1 213.6 166.9 222.6 176.0C231.6 185.1 241.4 194.3 250.4 202.0C259.4 209.7 270.7 218.1 276.3 222.3C281.9 226.5 282.6 226.2 283.8 227.0L275.3 232.6C274.6 232.4 276.5 234.8 270.8 231.6C265.1 228.3 252.1 220.5 241.0 213.1C229.9 205.7 214.8 195.4 204.0 187.1C193.2 178.8 185.5 172.3 176.3 163.1C167.1 153.8 156.3 141.5 148.6 131.6C140.9 121.7 135.9 113.7 130.0 103.8C124.1 93.9 116.2 77.5 113.4 72.3Z" fill="url(#stem)"/>
    <clipPath id="sclip"><path d="M113.4 72.3L146.7 46.4C150.1 49.8 157.4 60.0 167.0 66.8C176.6 73.6 191.7 82.2 204.0 87.1C216.3 92.0 228.7 94.5 241.0 96.4C253.3 98.3 268.3 98.5 278.0 98.3C287.7 98.1 295.5 95.5 299.0 95.0L304 102L300.7 109.8C296.9 110.3 287.9 112.7 278.0 113.1C268.1 113.5 253.3 112.9 241.0 112.1C228.7 111.3 215.1 109.8 204.0 108.4C192.9 107.0 179.4 104.6 174.5 103.8C177.0 105.3 181.3 109.1 189.3 113.1C197.3 117.1 210.9 122.7 222.6 127.9C234.3 133.2 247.3 138.4 259.7 144.6C272.1 150.8 286.1 158.7 296.7 164.9C307.2 171.1 312.4 175.2 323.0 181.6C333.6 187.9 353.8 199.4 360.0 203.0L348.7 211.4C344.4 208.3 331.7 198.6 323.0 192.7C314.3 186.8 307.2 181.9 296.7 176.0C286.1 170.1 272.1 162.1 259.7 157.5C247.3 152.9 233.1 150.0 222.6 148.3C212.1 146.6 201.0 147.5 196.7 147.3C201.0 152.1 213.6 166.9 222.6 176.0C231.6 185.1 241.4 194.3 250.4 202.0C259.4 209.7 270.7 218.1 276.3 222.3C281.9 226.5 282.6 226.2 283.8 227.0L275.3 232.6C274.6 232.4 276.5 234.8 270.8 231.6C265.1 228.3 252.1 220.5 241.0 213.1C229.9 205.7 214.8 195.4 204.0 187.1C193.2 178.8 185.5 172.3 176.3 163.1C167.1 153.8 156.3 141.5 148.6 131.6C140.9 121.7 135.9 113.7 130.0 103.8C124.1 93.9 116.2 77.5 113.4 72.3Z"/></clipPath>
    <g clip-path="url(#sclip)"><g filter="url(#sblur)" fill="none" stroke-linecap="round">
      <path d="M113.4 72.3C116.2 77.5 124.1 93.9 130.0 103.8C135.9 113.7 140.9 121.7 148.6 131.6C156.3 141.5 167.1 153.8 176.3 163.1C185.5 172.3 193.2 178.8 204.0 187.1C214.8 195.4 229.9 205.7 241.0 213.1C252.1 220.5 265.1 228.3 270.8 231.6C276.5 234.8 274.6 232.4 275.3 232.6" stroke="#dd9c8b" stroke-width="10" opacity="0.9"/>
      <path d="M174.5 103.8C179.4 104.6 192.9 107.0 204.0 108.4C215.1 109.8 228.7 111.3 241.0 112.1C253.3 112.9 268.1 113.5 278.0 113.1C287.9 112.7 296.9 110.3 300.7 109.8" stroke="#e2a693" stroke-width="6" opacity="0.85"/>
      <path d="M196.7 147.3C201.0 147.5 212.1 146.6 222.6 148.3C233.1 150.0 247.3 152.9 259.7 157.5C272.1 162.1 286.1 170.1 296.7 176.0C307.2 181.9 314.3 186.8 323.0 192.7C331.7 198.6 344.4 208.3 348.7 211.4" stroke="#e2a693" stroke-width="6" opacity="0.85"/>
      <path d="M155 60C170 78 188 90 206 97C226 104 250 106.5 292 103" stroke="#fff6ea" stroke-width="5.5" opacity="0.95"/>
      <path d="M180 112C200 124 225 137 258 152C290 168 322 188 350 206" stroke="#fff6ea" stroke-width="5" opacity="0.95"/>
      <path d="M150 104C160 124 180 148 200 162C222 186 248 208 278 228" stroke="#fff1e2" stroke-width="5" opacity="0.9"/>
      <path d="M128 70C142 92 160 112 178 128" stroke="#f6d3c0" stroke-width="9" opacity="0.7"/>
      <path d="M146.7 46.4C150.1 49.8 157.4 60.0 167.0 66.8C176.6 73.6 191.7 82.2 204.0 87.1C216.3 92.0 234.8 94.9 241.0 96.4" stroke="#e9b5a2" stroke-width="4" opacity="0.8"/>
    </g></g>
    <!-- stem ends -->
    <path d="M295 95.3L304 94.6L307 98.5L303 108.6L296 109.7Z" fill="#e9a79b"/>
    <path d="M350 197L361 204L349 212.5L339.5 206Z" fill="#ecada0"/>
    <path d="M276 221.5L284.5 227.5L275.5 233.5L267.5 228Z" fill="#ecada0"/>
  </svg>
</div>

  <svg class="abs" style="left:0;top:0;overflow:visible" width="1257" height="1080" viewBox="0 0 1257 1080"><path d="M898.6 737.2V756.3L902.6 752.8L906.6 761.6L909.7 760.2L905.8 751.6L912 750.6Z" fill="#050507" stroke="#fff" stroke-width="3" paint-order="stroke" stroke-linejoin="round" style="filter:drop-shadow(0 1px 1.5px rgba(0,0,0,.3))"/></svg>
</div>

<!-- PANEL -->
<div id="panel">
  
</div>
<div id="pc">
<!-- align icons row -->
  <svg style="left:0;top:0" width="1695" height="1080" viewBox="0 0 1695 1080">
    <g id="alignicons">
      <!-- 1 align left -->
      <rect x="1276.2" y="101" width="1.5" height="21" fill="#8c8c8c"/>
      <rect x="1279.5" y="104" width="9.7" height="6.5" fill="#dcdcdc"/>
      <rect x="1279.5" y="112" width="18.5" height="7.2" fill="#8e8e8e"/>
      <!-- 2 align center -->
      <rect x="1342.8" y="101" width="1.5" height="21" fill="#8c8c8c"/>
      <rect x="1339" y="104" width="9.7" height="6.5" fill="#dcdcdc"/>
      <rect x="1334.3" y="112" width="18.7" height="7.2" fill="#8e8e8e"/>
      <!-- 3 align right -->
      <rect x="1408.9" y="101" width="1.5" height="21" fill="#8c8c8c"/>
      <rect x="1397.4" y="104" width="9.7" height="6.5" fill="#dcdcdc"/>
      <rect x="1388.5" y="112" width="18.6" height="7.2" fill="#8e8e8e"/>
      <!-- 4 align top -->
      <rect x="1445" y="100.7" width="22" height="1.5" fill="#8c8c8c"/>
      <rect x="1448" y="103.6" width="7.1" height="18.2" fill="#8e8e8e"/>
      <rect x="1457" y="103.6" width="6.6" height="9.8" fill="#dcdcdc"/>
      <!-- 5 align middle -->
      <rect x="1500.3" y="110.7" width="22.1" height="1.5" fill="#8c8c8c"/>
      <rect x="1503.8" y="102" width="7.2" height="19" fill="#8e8e8e"/>
      <rect x="1512.6" y="106.5" width="6.5" height="9.9" fill="#dcdcdc"/>
      <!-- 6 align bottom -->
      <rect x="1557" y="120.8" width="22" height="1.5" fill="#8c8c8c"/>
      <rect x="1560" y="101.3" width="7.2" height="17.9" fill="#8e8e8e"/>
      <rect x="1569" y="109.5" width="6.9" height="9.7" fill="#dcdcdc"/>
      <!-- 7 distribute h -->
      <rect x="1617.1" y="101" width="1.5" height="21" fill="#8c8c8c"/>
      <rect x="1628.8" y="101" width="1.5" height="21" fill="#8c8c8c"/>
      <rect x="1614.2" y="103.6" width="7.3" height="15.6" fill="#8e8e8e"/>
      <rect x="1626" y="106.6" width="7" height="9.8" fill="#dcdcdc"/>
      <!-- 8 distribute v -->
      <rect x="1669.4" y="104.9" width="21.6" height="1.5" fill="#8c8c8c"/>
      <rect x="1669.4" y="116.6" width="21.6" height="1.5" fill="#8c8c8c"/>
      <rect x="1675.4" y="102.3" width="9.6" height="6.5" fill="#dcdcdc"/>
      <rect x="1672" y="113.8" width="16" height="7" fill="#8e8e8e"/>
    </g>
  </svg>

  <!-- DEFAULT STYLES -->
  <div class="hdr" style="left:1259px;top:134.2px;height:42.3px"><span style="top:8.5px">DEFAULT STYLES</span></div>
  <div class="abs" style="left:1281px;top:199px;width:405px;height:195px;background:#fdfdfb"></div>
  <div class="abs card1" style="left:1303.5px;top:221.5px;font-weight:bold;color:#575354">You’re in Default Styles mode.</div>
  <div class="abs card1" style="left:1303.5px;top:250px;color:#636161">Any style you pick now will be</div>
  <div class="abs card1" style="left:1303.5px;top:278.5px;color:#636161">applied to all new objects you add to</div>
  <div class="abs card1" style="left:1303.5px;top:307px;color:#636161">the page.</div>
  <div class="abs card1" style="left:1303.5px;top:345px;color:#0a6ee0">Clear default styles</div>

  <!-- TEXT -->
  <div class="hdr" style="left:1259px;top:416.8px;height:42.2px"><span style="top:10.3px">TEXT</span></div>

  <!-- row 1 -->
  <div class="box" style="left:1281px;top:482.5px;width:255px;height:45px"><div class="vdiv" style="left:217.5px"></div></div>
  <div class="ph" style="left:1292px;top:492.7px;font-size:22.5px;line-height:28px;letter-spacing:0.5px">Font family</div>
  <div class="arrow" style="left:1513.3px;top:503.4px"></div>
  <div class="box" style="left:1547.3px;top:482.5px;width:139px;height:46px"><div class="vdiv" style="left:101px"></div></div>
  <div class="ph" style="left:1556.5px;top:497px;font-size:17.5px;line-height:20px;letter-spacing:1.2px">None</div>
  <div class="arrow" style="left:1663.8px;top:503.8px"></div>

  <!-- row 2 -->
  <div class="box" style="left:1281px;top:540.2px;width:219px;height:43px"></div>
  <div class="abs" style="left:1295.2px;top:553.9px;font-size:17.5px;line-height:20px;color:#666">A</div>
  <div class="abs" style="left:1322px;top:543.5px;width:175px;height:35.5px;background:#666;border:1px solid #555"></div>
  <div class="box" style="left:1511.7px;top:540.2px;width:174.6px;height:43px"><div class="vdiv" style="left:136.6px"></div></div>
  <div class="abs" style="left:1520.9px;top:561.5px;font-size:12px;line-height:13px;font-weight:bold;color:#555">T</div>
  <div class="abs" style="left:1527.1px;top:553.5px;font-size:20px;line-height:22px;color:#555;-webkit-text-stroke:0.5px #555">T</div>
  <div class="abs" style="left:1617.5px;top:554px;font-size:15.5px;line-height:18px;color:#c2c2c2;letter-spacing:0.4px">PX</div>
  <div class="arrow" style="left:1663.8px;top:561px"></div>

  <!-- row 3 : B I U S -->
  <div class="btnrow" style="left:1281px;top:595px;width:400px;height:39.7px"><div class="vdiv" style="left:98.4px"></div><div class="vdiv" style="left:198.4px"></div><div class="vdiv" style="left:298.4px"></div></div>
  <div class="abs" style="left:1325.3px;top:606.6px;font-size:17.5px;line-height:20px;font-weight:bold;color:#222">B</div>
  <div class="abs" style="left:1426.2px;top:606.4px;font-size:18px;line-height:20px;font-weight:bold;font-style:italic;color:#222;font-family:'Liberation Serif',serif">I</div>
  <div class="abs" style="left:1524.8px;top:605.9px;font-size:17.5px;line-height:20px;color:#222;-webkit-text-stroke:0.3px #222">U</div>
  <div class="abs" style="left:1524.6px;top:624.8px;width:13.4px;height:1.5px;background:#222"></div>
  <svg style="left:0;top:0" width="1695" height="1080" viewBox="0 0 1695 1080">
    <!-- strikethrough -->
    <g fill="#222">
      <rect x="1624.8" y="610.3" width="11.4" height="1.9"/>
      <rect x="1629.4" y="610.3" width="2.2" height="4"/>
      <rect x="1621.4" y="616.5" width="17.8" height="1.8"/>
      <rect x="1629.4" y="620.4" width="2.2" height="3.8"/>
    </g>
    <!-- row 4 align icons -->
    <g fill="#333">
      <rect x="1322.8" y="659.5" width="18.1" height="1.6"/><rect x="1322.8" y="663.5" width="12.4" height="1.6"/><rect x="1322.8" y="667.4" width="18.1" height="1.6"/><rect x="1322.8" y="671.4" width="12.4" height="1.6"/><rect x="1322.8" y="675.4" width="18.1" height="1.6"/>
      <rect x="1422.2" y="659.5" width="17.8" height="1.6"/><rect x="1425.4" y="663.5" width="11.4" height="1.6"/><rect x="1422.2" y="667.4" width="17.8" height="1.6"/><rect x="1425.4" y="671.4" width="11.4" height="1.6"/><rect x="1422.2" y="675.4" width="17.8" height="1.6"/>
      <rect x="1522" y="659.5" width="18.1" height="1.6"/><rect x="1527.7" y="663.5" width="12.4" height="1.6"/><rect x="1522" y="667.4" width="18.1" height="1.6"/><rect x="1527.7" y="671.4" width="12.4" height="1.6"/><rect x="1522" y="675.4" width="18.1" height="1.6"/>
      <rect x="1621.4" y="659.5" width="17.8" height="1.6"/><rect x="1621.4" y="663.5" width="17.8" height="1.6"/><rect x="1621.4" y="667.4" width="17.8" height="1.6"/><rect x="1621.4" y="671.4" width="17.8" height="1.6"/><rect x="1621.4" y="675.4" width="17.8" height="1.6"/>
    </g>
  </svg>
  <div class="btnrow" style="left:1281px;top:646.3px;width:400px;height:38.8px"><div class="vdiv" style="left:98.4px"></div><div class="vdiv" style="left:198.4px"></div><div class="vdiv" style="left:298.4px"></div></div>
  <div class="btnrow" style="left:1281px;top:697px;width:400px;height:39px"><div class="vdiv" style="left:98.4px"></div><div class="vdiv" style="left:198.4px"></div><div class="abs" style="left:297.6px;top:-1.7px;width:101.2px;height:39.6px;background:#fefefc;border:1px solid #b6b6b6;box-shadow:inset 0 0 0 0.7px #b6b6b6;border-radius:0 5px 5px 0"></div></div>
  <svg style="left:0;top:0" width="1695" height="1080" viewBox="0 0 1695 1080">
    <g fill="#333">
      <!-- v-top -->
      <rect x="1324" y="710.6" width="16.2" height="1.7"/>
      <rect x="1331.3" y="717" width="1.8" height="11"/>
      <path d="M1332.2 714.6L1336.4 720H1328Z"/>
      <!-- v-middle -->
      <rect x="1423.2" y="718.9" width="15.8" height="1.7"/>
      <rect x="1430.2" y="709.4" width="1.8" height="4"/>
      <path d="M1431.1 717L1427.4 712.4H1434.8Z"/>
      <rect x="1430.2" y="726.4" width="1.8" height="4"/>
      <path d="M1431.1 722.6L1427.4 727.2H1434.8Z"/>
      <!-- v-bottom -->
      <rect x="1523.3" y="726.7" width="15.8" height="1.7"/>
      <rect x="1530.5" y="711.4" width="1.8" height="9"/>
      <path d="M1531.4 724L1527.3 718.8H1535.5Z"/>
    </g>
    <path fill="#0d6efd" fill-rule="evenodd" d="M1627.2 712.4L1627.4 709.6L1632.8 709.6L1633.0 712.4L1634.8 713.4L1637.4 712.2L1640.0 716.8L1637.7 718.4L1637.7 720.6L1640.0 722.2L1637.4 726.8L1634.8 725.6L1633.0 726.6L1632.8 729.4L1627.4 729.4L1627.2 726.6L1625.4 725.6L1622.8 726.8L1620.2 722.2L1622.5 720.6L1622.5 718.4L1620.2 716.8L1622.8 712.2L1625.4 713.4ZM1626.4 719.5a3.7 3.7 0 1 0 7.4 0a3.7 3.7 0 1 0 -7.4 0Z" stroke="#0d6efd" stroke-width="0.8" stroke-linejoin="round"/>
    <!-- pointer -->
    <path d="M1259 760.2H1617.5L1628.6 748.6L1639.9 760.2H1695" fill="none" stroke="#d9d9d7" stroke-width="1.8"/>
    <!-- line-height icon -->
    <g fill="#555">
      <rect x="1291.5" y="802.5" width="1.6" height="12"/>
      <path d="M1292.3 800L1295.3 804H1289.3Z"/><path d="M1292.3 816.8L1295.3 812.8H1289.3Z"/>
      <rect x="1298.5" y="801.4" width="10.5" height="1.6"/><rect x="1298.5" y="807.6" width="10.5" height="1.6"/><rect x="1298.5" y="813.8" width="10.5" height="1.6"/>
      <!-- AV arrow -->
      <rect x="1429" y="814.3" width="17.4" height="1.6"/>
      <path d="M1426.6 815.1L1430.8 812V818.2Z"/><path d="M1448.7 815.1L1444.5 812V818.2Z"/>
    </g>
    <!-- fill bucket -->
    <g fill="#6a6a6a">
      <path d="M1293.6 931.2L1295.3 930L1306.2 940L1299.6 945.6L1292 938.6L1296.6 934.2Z M1298 935.6L1294.6 938.6H1303.4Z" fill-rule="evenodd"/>
      <path d="M1307.6 941.2C1308.8 943 1309.6 944 1309.6 945A2 2 0 0 1 1305.6 945C1305.6 944 1306.4 943 1307.6 941.2Z"/>
      <!-- pencil -->
      <path d="M1293 996.4L1303.6 985.8L1307.4 989.6L1296.8 1000.2H1293Z"/>
      <path d="M1304.8 984.6L1306 983.4A1.2 1.2 0 0 1 1307.7 983.4L1309.8 985.5A1.2 1.2 0 0 1 1309.8 987.2L1308.6 988.4Z"/>
    </g>
    <rect x="1289.9" y="948.8" width="22.3" height="3.3" fill="#c6c6c6"/>
    <rect x="1289.9" y="1002.8" width="22.3" height="3.3" fill="#bdbdbd"/>
    <!-- weight icon -->
    <g fill="#555">
      <rect x="1289.4" y="1051.6" width="1.6" height="1.6"/><rect x="1293" y="1050.4" width="2.6" height="2.8"/><rect x="1297.4" y="1049" width="4.4" height="4.2"/><rect x="1303.4" y="1047" width="6.3" height="6.2"/>
    </g>
    <!-- line style icon -->
    <g stroke="#777" fill="none">
      <path d="M1496.8 1043.2H1517.3" stroke-width="1.6"/>
      <path d="M1496.8 1046.9H1517.3" stroke-width="1.6"/>
      <path d="M1496.8 1050.6H1517.3" stroke-width="1.4" stroke-dasharray="4 1.4"/>
      <path d="M1496.8 1053.6H1517.3" stroke-width="1.2" stroke-dasharray="2 1.2"/>
      <path d="M1496.8 1056.6H1517.3" stroke-width="1.2" stroke-dasharray="1 1"/>
    </g>
  </svg>

  <!-- row 6 -->
  <div class="box" style="left:1281px;top:783.6px;width:128.4px;height:43.4px"><div class="vdiv" style="left:90px"></div></div>
  <div class="arrow" style="left:1385.3px;top:803.4px"></div>
  <div class="box" style="left:1420.2px;top:783.6px;width:127.2px;height:43.4px;border-color:#b9b9b9"></div>
  <div class="abs" style="left:1427.2px;top:796.3px;font-size:12.5px;line-height:14px;font-weight:bold;color:#555;letter-spacing:0.6px;transform:scaleX(1.2);transform-origin:left top">AV</div>
  <div class="abs" style="left:1511px;top:797.6px;font-size:15px;line-height:18px;color:#c2c2c2;letter-spacing:0.6px">PX</div>
  <div class="btnrow" style="left:1558.6px;top:783.6px;width:113.4px;height:43.4px"><div class="vdiv" style="left:55.8px"></div></div>
  <div class="abs" style="left:1572px;top:794.4px;font-size:21.5px;line-height:24px;font-weight:bold;color:#222;letter-spacing:1px">AA</div>
  <div class="abs" style="left:1630.6px;top:794.4px;font-size:21.5px;line-height:24px;font-weight:bold;color:#222">A</div>
  <div class="abs" style="left:1646.8px;top:801.6px;font-size:13.4px;line-height:16px;font-weight:bold;color:#222">A</div>

  <!-- FILLS & STROKES -->
  <div class="hdr" style="left:1259px;top:849.6px;height:43.8px"><span style="top:11.1px">FILLS &amp; STROKES</span></div>
  <div class="box" style="left:1281px;top:916.3px;width:405.3px;height:42.4px"></div>
  <div class="abs" style="left:1322px;top:920.2px;width:180px;height:35px;background:#67a5c6;border:1px solid #4e8fb3"></div>
  <div class="abs" style="left:1503.6px;top:920.2px;width:179.6px;height:35px;background:#fca904;border:1px solid #e39b12"></div>
  <div class="box" style="left:1281px;top:970.2px;width:405.3px;height:43.4px"></div>
  <div class="abs" style="left:1322px;top:973.6px;width:361.2px;height:36.3px;background:#b50f23"></div>
  <div class="box" style="left:1281px;top:1025.4px;width:197.2px;height:42.8px"><div class="vdiv" style="left:159.2px"></div></div>
  <div class="abs" style="left:1317.4px;top:1033.6px;font-size:23px;line-height:28px;color:#222">0</div>
  <div class="abs" style="left:1409.4px;top:1040px;font-size:15px;line-height:18px;color:#c2c2c2;letter-spacing:0.6px">PT</div>
  <div class="arrow" style="left:1454.7px;top:1044.9px"></div>
  <div class="box" style="left:1489px;top:1025.4px;width:197.3px;height:42.8px"><div class="vdiv" style="left:159.2px"></div></div>
  <div class="abs" style="left:1524.2px;top:1033.6px;font-size:23px;line-height:28px;color:#9a9a9a;letter-spacing:0.4px">Solid</div>
  <div class="arrow" style="left:1663.6px;top:1044.9px"></div>

</div>

</div>
</body>
</html>
